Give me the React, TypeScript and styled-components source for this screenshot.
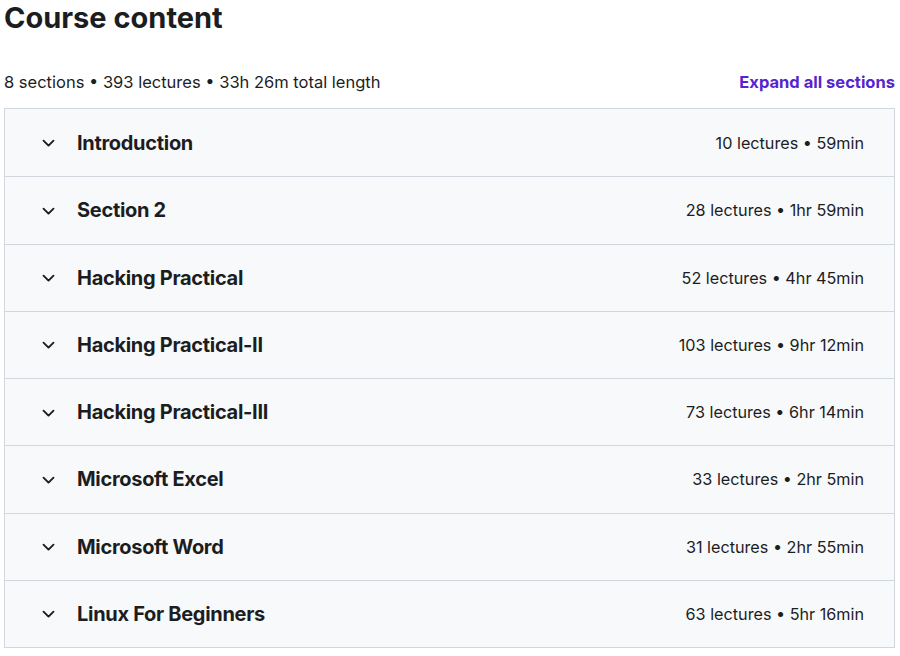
import React from "react";
import styled, { createGlobalStyle } from "styled-components";

const GlobalStyle = createGlobalStyle`
  * { box-sizing: border-box; }
  body {
    margin: 0;
    background: #ffffff;
    font-family: Inter, "Noto Sans", Roboto, sans-serif;
    color: #1c1d1f;
  }
`;

const Page = styled.div`
  padding: 0 5px 0 4px;
`;

const Title = styled.h2`
  margin: 0;
  font-size: 29px;
  font-weight: 700;
  line-height: 36px;
`;

const Summary = styled.div`
  display: flex;
  align-items: center;
  justify-content: space-between;
  margin-top: 34px;
  height: 24px;
  margin-bottom: 14px;
`;

const SummaryText = styled.span`
  font-size: 16.5px;
`;

const ExpandButton = styled.button`
  border: 0;
  background: none;
  padding: 0;
  font-family: inherit;
  font-size: 16.5px;
  font-weight: 700;
  color: #5624d0;
  cursor: pointer;
`;

const List = styled.ul`
  list-style: none;
  margin: 0;
  padding: 0;
  border: 1px solid #d1d7dc;
`;

const Row = styled.li`
  display: flex;
  align-items: center;
  height: 67.25px;
  padding: 0 30px 0 36px;
  background: #f7f9fa;
  & + & {
    border-top: 1px solid #d1d7dc;
  }
`;

const Chevron = styled.svg`
  width: 15px;
  height: 15px;
  flex-shrink: 0;
  margin-right: 21px;
`;

const SectionTitle = styled.span`
  flex: 1;
  font-size: 20px;
  font-weight: 700;
  letter-spacing: -0.3px;
`;

const Meta = styled.span`
  font-size: 16.2px;
`;

const sections = [
  { title: "Introduction", meta: "10 lectures • 59min" },
  { title: "Section 2", meta: "28 lectures • 1hr 59min" },
  { title: "Hacking Practical", meta: "52 lectures • 4hr 45min" },
  { title: "Hacking Practical-II", meta: "103 lectures • 9hr 12min" },
  { title: "Hacking Practical-III", meta: "73 lectures • 6hr 14min" },
  { title: "Microsoft Excel", meta: "33 lectures • 2hr 5min" },
  { title: "Microsoft Word", meta: "31 lectures • 2hr 55min" },
  { title: "Linux For Beginners", meta: "63 lectures • 5hr 16min" },
];

const App = () => {
  return (
    <Page>
      <GlobalStyle />
      <Title>Course content</Title>
      <Summary>
        <SummaryText>8 sections • 393 lectures • 33h 26m total length</SummaryText>
        <ExpandButton>Expand all sections</ExpandButton>
      </Summary>
      <List>
        {sections.map((s) => (
          <Row key={s.title}>
            <Chevron viewBox="0 0 24 24" fill="none" stroke="#1c1d1f" strokeWidth={3} strokeLinecap="round" strokeLinejoin="round">
              <path d="M4 9l8 8 8-8" />
            </Chevron>
            <SectionTitle>{s.title}</SectionTitle>
            <Meta>{s.meta}</Meta>
          </Row>
        ))}
      </List>
    </Page>
  );
};

export default App;
